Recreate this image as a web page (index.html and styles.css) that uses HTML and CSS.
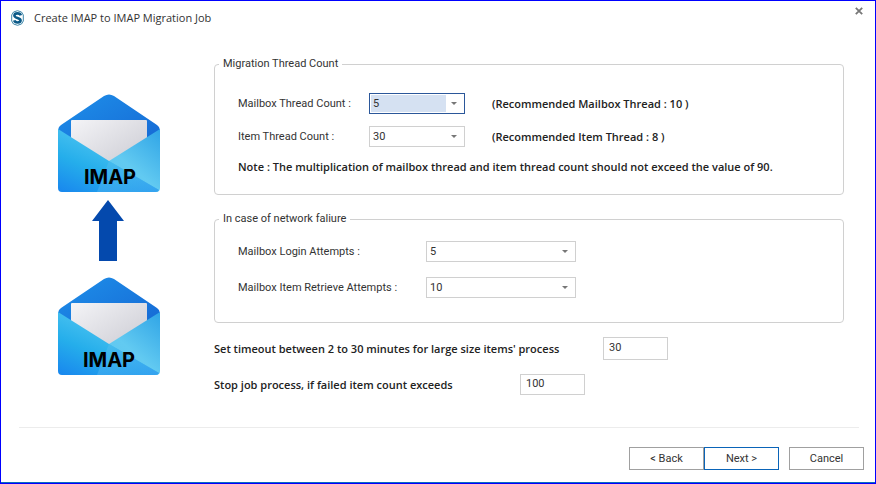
FILE: index.html
```html
<!DOCTYPE html>
<html lang="en">
<head>
  <meta charset="UTF-8">
  <meta name="viewport" content="width=device-width, initial-scale=1.0">
  <title>Create IMAP to IMAP Migration Job</title>
  <link rel="stylesheet" href="styles.css">
</head>
<body>
  <form class="dialog">
    <header class="titlebar">
      <svg class="logo" width="13" height="16" viewBox="0 0 13 16" aria-hidden="true">
        <path d="M6.500.7 L10.500 2 L12.300 5 V11 L10.500 14 L6.500 15.300 L2.500 14 L.7 11 V5 L2.500 2 Z" fill="#fff" stroke="#3d86a8" stroke-width="1"/>
        <path d="M9.800 5.400 C9.200 2.800 3.600 2.600 3.400 5.600 C3.300 8.400 9.800 7.400 9.600 10.400 C9.400 13.200 4 13 3.200 10.400" fill="none" stroke="#0b5a88" stroke-width="2.600"/>
      </svg>
      <h1>Create IMAP to IMAP Migration Job</h1>
      <button type="button" class="close" aria-label="Close">
        <svg width="8" height="8" viewBox="0 0 8 8"><path d="M.8.8 L7.200 7.200 M7.200.8 L.8 7.200" stroke="#777" stroke-width="1.800"/></svg>
      </button>
    </header>

    <div class="content">
      <!-- Source and destination mailboxes -->
      <div class="illustration">
        <svg width="104" height="99" viewBox="0 0 104 99" role="img" aria-label="IMAP">
          <defs>
            <linearGradient id="flap" x1="0" y1="0" x2="1" y2="1">
              <stop offset="0" stop-color="#1e90ea"/>
              <stop offset="1" stop-color="#1565d2"/>
            </linearGradient>
            <linearGradient id="paper" x1="0" y1="0" x2="1" y2="1">
              <stop offset="0" stop-color="#f4f4f7"/>
              <stop offset="1" stop-color="#c8c8d0"/>
            </linearGradient>
            <linearGradient id="right" x1="0" y1="1" x2="1" y2="0">
              <stop offset="0" stop-color="#5cc6f0"/>
              <stop offset=".5" stop-color="#62caf1"/>
              <stop offset="1" stop-color="#2fa4e6"/>
            </linearGradient>
            <linearGradient id="front" x1="0" y1="1" x2=".7" y2="0">
              <stop offset="0" stop-color="#1886ee"/>
              <stop offset=".4" stop-color="#25aeeb"/>
              <stop offset="1" stop-color="#63d0f3"/>
            </linearGradient>
            <linearGradient id="fold" x1="0" y1="0" x2="1" y2="1">
              <stop offset="0" stop-color="#50c3ee"/>
              <stop offset="1" stop-color="#3a98f2"/>
            </linearGradient>
            <g id="envelope">
              <path d="M1 36 Q1 33 4 31 L47 2 Q52 -1 57 2 L100 31 Q103 33 103 36 V60 H1 Z" fill="url(#flap)"/>
              <rect x="14" y="26" width="76" height="50" rx="1" fill="url(#paper)"/>
              <path d="M103 35 V94 Q103 98 99 98 H30 L52 67 Z" fill="url(#right)"/>
              <path d="M1 35 L52 67 L102 96 Q101 98 98 98 H5 Q1 98 1 94 Z" fill="url(#front)"/>
              <path d="M52 67 L102 96 Q101 98 98 98 H40 Z" fill="url(#fold)" opacity=".6"/>
            </g>
          </defs>
          <use href="#envelope"/>
          <text class="envelope-label" x="53" y="90" text-anchor="middle">IMAP</text>
        </svg>
        <svg class="arrow" width="32" height="61" viewBox="0 0 32 61" aria-hidden="true">
          <path d="M16 0 L32 21 H25 V61 H7 V21 H0 Z" fill="#0449ad"/>
        </svg>
        <svg width="104" height="99" viewBox="0 0 104 99" role="img" aria-label="IMAP">
          <use href="#envelope"/>
          <text class="envelope-label" x="52" y="90" text-anchor="middle">IMAP</text>
        </svg>
      </div>

      <div class="settings">
        <fieldset class="threads">
          <legend>Migration Thread Count</legend>
          <div class="row">
            <label for="mailboxThreads">Mailbox Thread Count :</label>
            <span class="select active">
              <select id="mailboxThreads"><option>5</option></select>
            </span>
            <strong class="hint">(Recommended Mailbox Thread : 10 )</strong>
          </div>
          <div class="row">
            <label for="itemThreads">Item Thread Count :</label>
            <span class="select">
              <select id="itemThreads"><option>30</option></select>
            </span>
            <strong class="hint">(Recommended Item Thread : 8 )</strong>
          </div>
          <p class="note">Note : The multiplication of mailbox thread and item thread count should not exceed the value of 90.</p>
        </fieldset>

        <fieldset class="network">
          <legend>In case of network faliure</legend>
          <div class="row">
            <label for="loginAttempts">Mailbox Login Attempts :</label>
            <span class="select">
              <select id="loginAttempts"><option>5</option></select>
            </span>
          </div>
          <div class="row">
            <label for="retrieveAttempts">Mailbox Item Retrieve Attempts :</label>
            <span class="select">
              <select id="retrieveAttempts"><option>10</option></select>
            </span>
          </div>
        </fieldset>

        <div class="limit timeout">
          <label for="timeout">Set timeout between 2 to 30 minutes for large size items' process</label>
          <input type="text" id="timeout" value="30">
        </div>
        <div class="limit failed">
          <label for="failedItems">Stop job process, if failed item count exceeds</label>
          <input type="text" id="failedItems" value="100">
        </div>
      </div>
    </div>

    <footer class="actions">
      <button type="button">&lt; Back</button>
      <button type="submit" class="primary">Next &gt;</button>
      <button type="button" class="cancel">Cancel</button>
    </footer>
  </form>
</body>
</html>
```
FILE: styles.css
```css
* {
  box-sizing: border-box;
}

body {
  margin: 0;
  background-color: white;
  color: #333;
  font-family: Roboto, "Liberation Sans", sans-serif;
  font-size: 11px;
  line-height: 16px;
}

.dialog {
  display: flex;
  flex-direction: column;
  min-height: 100vh;
  border: 1px solid #0000ff;
  box-shadow: inset 0 -1px 0 #0a6cbc;
}

.titlebar {
  display: flex;
  align-items: center;
  height: 34px;
  padding: 0 12px 0 10px;
}

h1 {
  flex: 1;
  margin: 0 0 0 10px;
  font-family: "Open Sans", sans-serif;
  font-size: 11px;
  font-weight: normal;
}

.close {
  align-self: flex-start;
  display: flex;
  margin-top: 6px;
  padding: 0;
  border: none;
  background: none;
}

.content {
  display: flex;
  padding: 21px 31px 0 56px;
}

.illustration {
  display: flex;
  flex-direction: column;
  align-items: center;
  width: 104px;
  margin-top: 38px;
}

.arrow {
  margin: 7px 2px 16px 0;
}

.envelope-label {
  fill: #000;
  font-family: Inter, sans-serif;
  font-size: 20px;
  font-weight: bold;
}

.settings {
  flex: 1;
  margin-left: 53px;
}

fieldset {
  min-width: 0;
  margin: 0;
  border: 1px solid #d0d0d0;
  border-radius: 4px;
}

legend {
  padding: 0 4px;
}

.threads {
  padding: 21px 23px 19px 4px;
}

.network {
  margin-top: 16px;
  padding: 14px 23px 24px 4px;
}

.row {
  display: grid;
  align-items: center;
  padding-left: 19px;
}

.threads .row {
  grid-template-columns: 131px 96px 1fr;
}

.network .row {
  grid-template-columns: 188px 150px;
}

.threads .row + .row {
  margin-top: 12px;
}

.network .row + .row {
  margin-top: 15px;
}

.hint {
  margin-left: 27px;
}

.hint,
.note,
.limit label {
  color: #222;
  font-family: "Open Sans", sans-serif;
  font-weight: 600;
}

.note {
  margin: 12px 0 0 19px;
}

.select {
  position: relative;
  display: block;
}

/* drop-down arrow */
.select::after {
  content: "";
  position: absolute;
  top: 9px;
  right: 8px;
  border: 3px solid transparent;
  border-top-color: #777;
  border-bottom: none;
  pointer-events: none;
}

select,
input {
  display: block;
  height: 21px;
  padding: 0 3px;
  border: 1px solid #d0d0d0;
  border-radius: 0;
  background-color: white;
  color: #333;
  font: inherit;
  appearance: none;
}

select {
  width: 100%;
}

.active select {
  border-color: #2b579a;
  background: linear-gradient(#d5e1f2, #d5e1f2) 1px 1px / 75px 17px no-repeat white;
}

input {
  width: 65px;
  padding: 0 5px 2px;
}

.limit {
  display: flex;
  align-items: center;
  margin-top: 14px;
}

.timeout label {
  width: 389px;
}

.timeout input {
  height: 23px;
}

.failed label {
  width: 306px;
}

.actions {
  display: flex;
  justify-content: flex-end;
  margin: auto 16px 0 18px;
  padding: 19px 0 13px;
  border-top: 1px solid #ececec;
}

.actions button {
  width: 75px;
  height: 23px;
  padding: 0;
  border: 1px solid #a0a0a0;
  background-color: white;
  color: #333;
  font: inherit;
}

.actions .primary {
  border-color: #0a64b8;
}

.actions .cancel {
  margin-left: 10px;
  margin-right: -5px;
}
```
